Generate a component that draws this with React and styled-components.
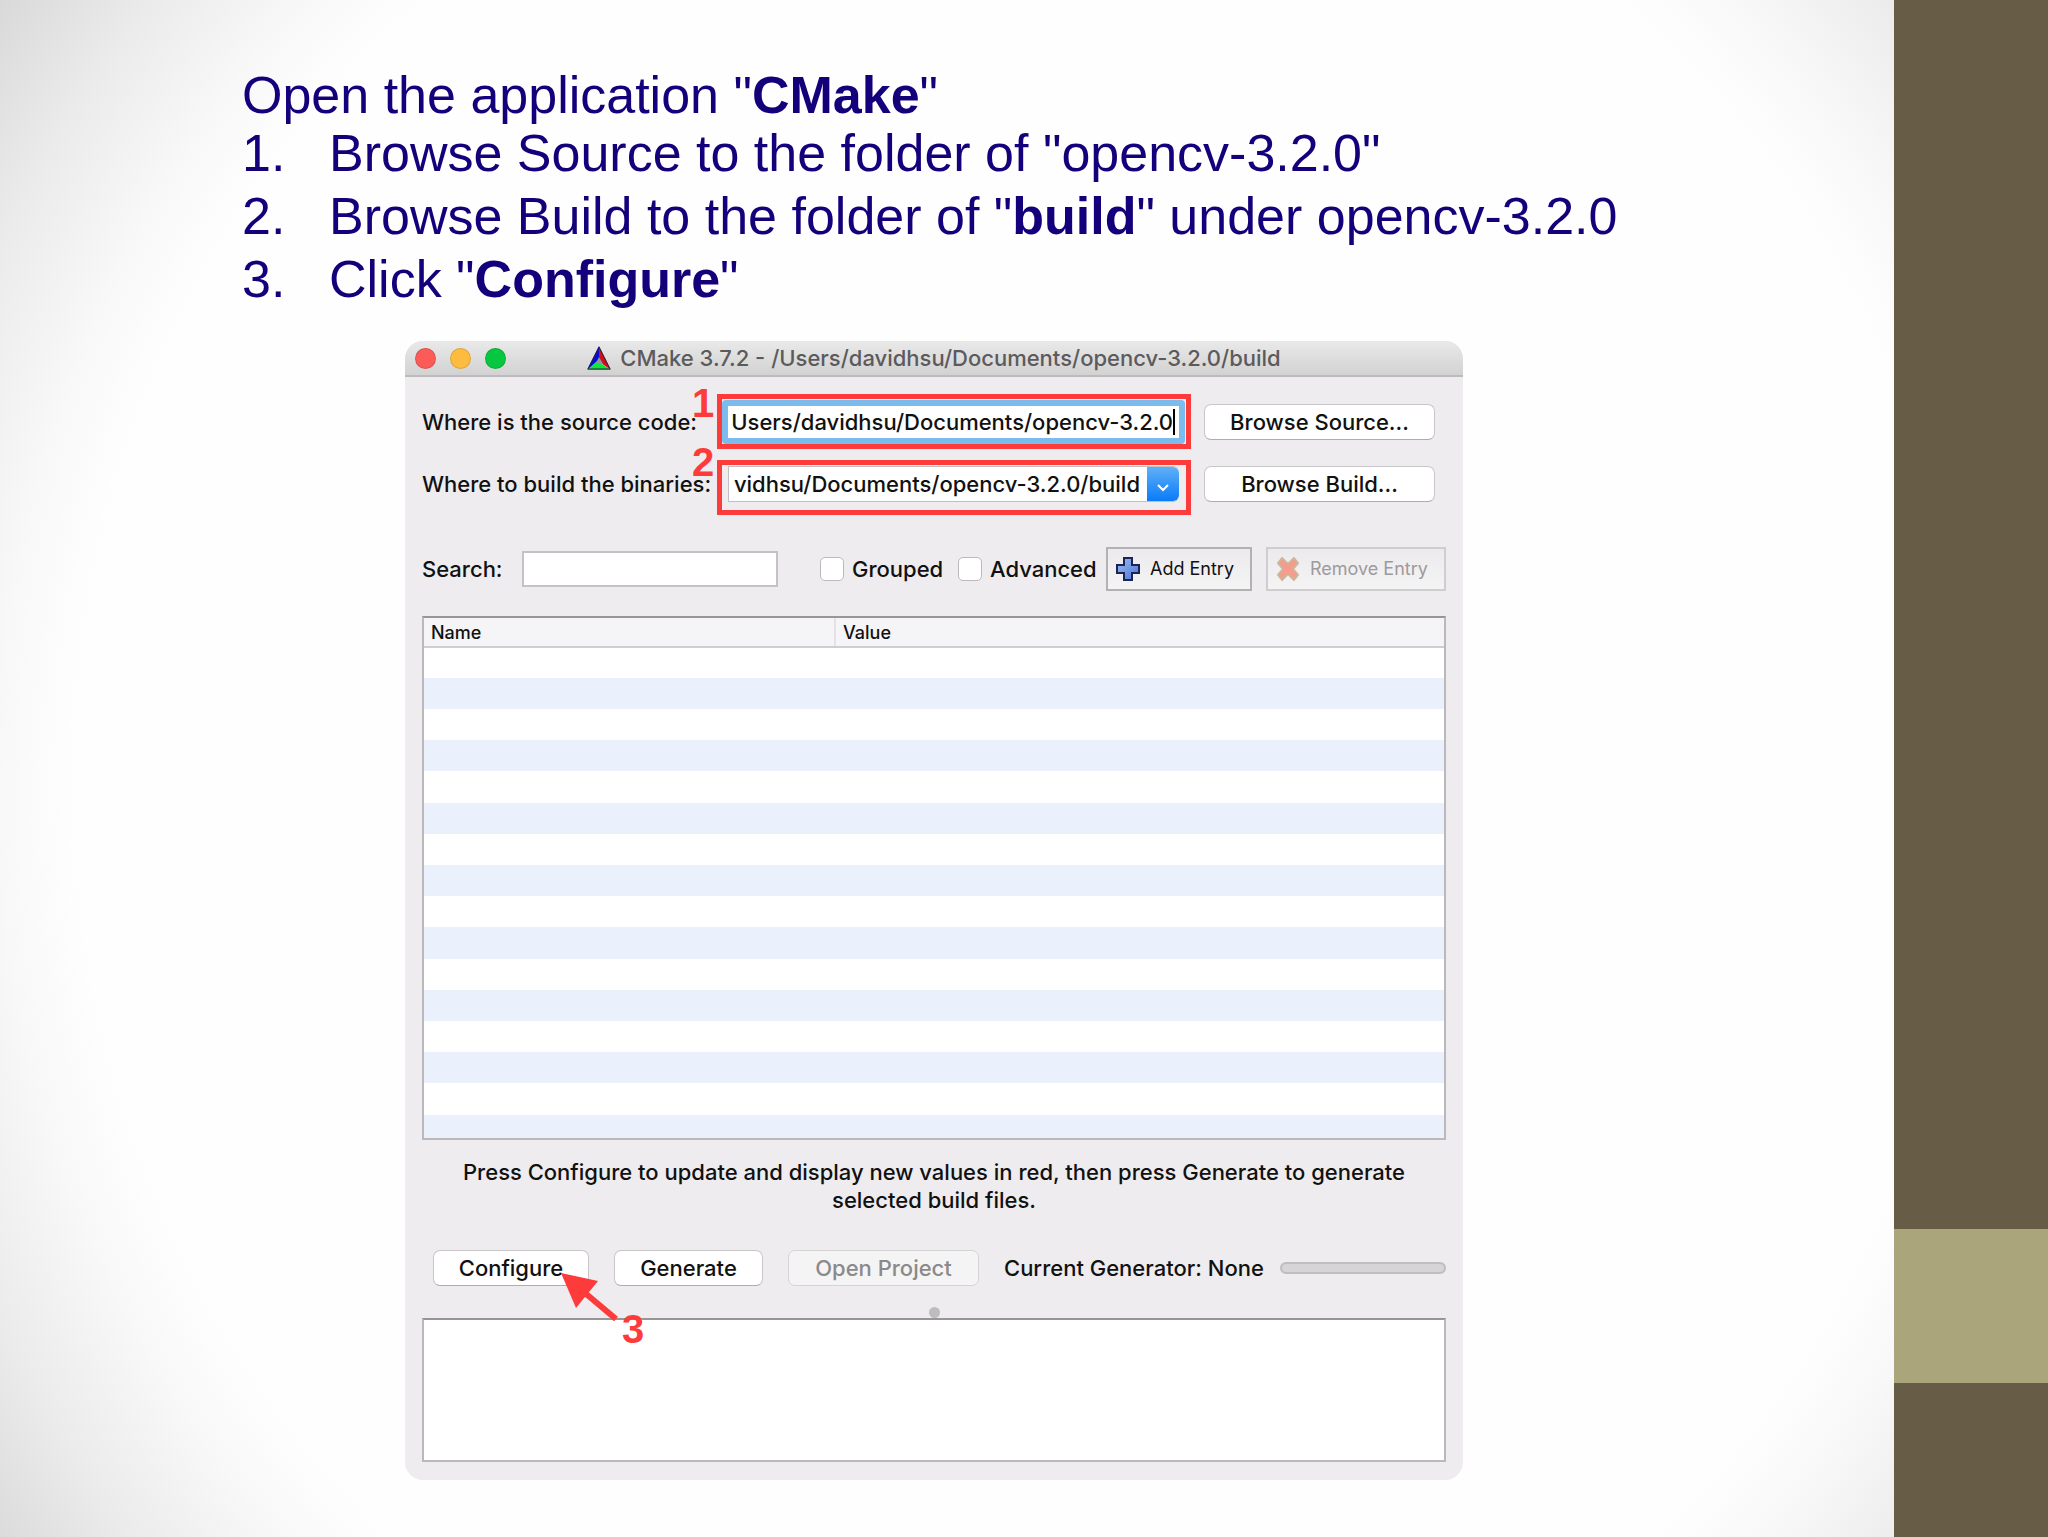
import React, { useState } from "react";
import styled, { createGlobalStyle } from "styled-components";

const rows = Array.from({ length: 16 }, (_, i) => i);

function CMakeLogo() {
  return (
    <svg width="24" height="24" viewBox="0 0 24 24" aria-hidden="true">
      <path d="M12 0 L0 24 L10 16 L13 12 Z" fill="#0a0ad2" />
      <path d="M12 0 L24 24 L14 17 L12 10 Z" fill="#cf1022" />
      <path d="M0 24 L10 15 L24 24 Z" fill="#0fe53c" />
      <path d="M12 11 L9 17 L16 18 Z" fill="#8d9a94" />
      <path d="M12 1 L1 23 H23 Z" fill="none" stroke="#23233a" strokeWidth="1" />
    </svg>
  );
}

function PlusIcon() {
  return (
    <svg width="24" height="24" viewBox="0 0 24 24" aria-hidden="true">
      <defs>
        <linearGradient id="plus" x1="0" y1="0" x2="1" y2="1">
          <stop offset="0" stopColor="#9dbcf5" />
          <stop offset="1" stopColor="#4a74cf" />
        </linearGradient>
      </defs>
      <path
        d="M8 1 H16 V8 H23 V16 H16 V23 H8 V16 H1 V8 H8 Z"
        fill="url(#plus)"
        stroke="#1a2458"
        strokeWidth="2"
      />
    </svg>
  );
}

function CrossIcon() {
  return (
    <svg width="24" height="24" viewBox="0 0 24 24" aria-hidden="true">
      <path
        d="M6 1 L12 7 L18 1 L22 6 L17 12 L22 18 L18 23 L12 17 L6 23 L2 18 L7 12 L2 6 Z"
        fill="#f79c8a"
        stroke="#cdb59c"
        strokeWidth="2"
        strokeLinejoin="round"
      />
    </svg>
  );
}

function App() {
  const [source, setSource] = useState("Users/davidhsu/Documents/opencv-3.2.0");
  const [build, setBuild] = useState("vidhsu/Documents/opencv-3.2.0/build");
  const [search, setSearch] = useState("");
  const [grouped, setGrouped] = useState(false);
  const [advanced, setAdvanced] = useState(false);

  return (
    <>
      <GlobalStyle />
      <StPage>
        <StSlide>
          <StIntro>
            <p>
              Open the application "<b>CMake</b>"
            </p>
            <ol>
              <li>Browse Source to the folder of "opencv-3.2.0"</li>
              <li>
                Browse Build to the folder of "<b>build</b>" under opencv-3.2.0
              </li>
              <li>
                Click "<b>Configure</b>"
              </li>
            </ol>
          </StIntro>

          <StWindow>
            <StTitleBar>
              <StLights>
                <StLight $color="#fc5b57" aria-label="Close" />
                <StLight $color="#fdbc40" aria-label="Minimize" />
                <StLight $color="#06c73f" aria-label="Zoom" />
              </StLights>
              <StTitle>
                <CMakeLogo />
                CMake 3.7.2 - /Users/davidhsu/Documents/opencv-3.2.0/build
              </StTitle>
            </StTitleBar>

            <StContent>
              <StPaths>
                <label htmlFor="source">Where is the source code:</label>
                <StField>
                  <StFocusRing>
                    <StPathInput
                      id="source"
                      value={source}
                      onChange={(e) => setSource(e.target.value)}
                    />
                    <StCaret />
                  </StFocusRing>
                  <StMark />
                  <StStep $top="-11px">1</StStep>
                </StField>
                <StButton>Browse Source...</StButton>

                <label htmlFor="build">Where to build the binaries:</label>
                <StField>
                  <StCombo>
                    <StPathInput
                      id="build"
                      value={build}
                      onChange={(e) => setBuild(e.target.value)}
                    />
                    <StArrowButton aria-label="Show recent build folders">
                      <svg width="12" height="8" viewBox="0 0 12 8" aria-hidden="true">
                        <path d="M1 1 L6 6 L11 1" fill="none" stroke="#fff" strokeWidth="2" />
                      </svg>
                    </StArrowButton>
                  </StCombo>
                  <StMark />
                  <StStep $top="-18px">2</StStep>
                </StField>
                <StButton>Browse Build...</StButton>
              </StPaths>

              <StToolbar>
                <label htmlFor="search">Search:</label>
                <StSearch
                  id="search"
                  value={search}
                  onChange={(e) => setSearch(e.target.value)}
                />
                <StCheck>
                  <input
                    type="checkbox"
                    checked={grouped}
                    onChange={(e) => setGrouped(e.target.checked)}
                  />
                  Grouped
                </StCheck>
                <StCheck>
                  <input
                    type="checkbox"
                    checked={advanced}
                    onChange={(e) => setAdvanced(e.target.checked)}
                  />
                  Advanced
                </StCheck>
                <StEntryButton $width="146px">
                  <PlusIcon />
                  Add Entry
                </StEntryButton>
                <StEntryButton $width="180px" disabled>
                  <CrossIcon />
                  Remove Entry
                </StEntryButton>
              </StToolbar>

              <StTableBox>
                <StTable>
                  <thead>
                    <tr>
                      <th>Name</th>
                      <th>Value</th>
                    </tr>
                  </thead>
                  <tbody>
                    {rows.map((row) => (
                      <tr key={row}>
                        <td />
                        <td />
                      </tr>
                    ))}
                  </tbody>
                </StTable>
              </StTableBox>

              <StHint>
                Press Configure to update and display new values in red, then press Generate to
                generate selected build files.
              </StHint>

              <StActions>
                <StConfigure>
                  <StButton $width="156px">Configure</StButton>
                  <StPointer>
                    <svg width="58" height="48" viewBox="0 0 58 48" aria-hidden="true">
                      <path d="M24 20 L55 46" stroke="#fd3b3b" strokeWidth="6" />
                      <path d="M0 0 L37 8 L15 35 Z" fill="#fd3b3b" />
                    </svg>
                    <span>3</span>
                  </StPointer>
                </StConfigure>
                <StButton $width="149px">Generate</StButton>
                <StButton $width="191px" disabled>
                  Open Project
                </StButton>
                <StGenerator>
                  Current Generator: None
                  <StProgress role="progressbar" aria-label="Progress" />
                </StGenerator>
              </StActions>

              <StSplitter />
              <StOutput aria-label="Output" readOnly />
            </StContent>
          </StWindow>
        </StSlide>
        <StSide>
          <StSideBlock />
        </StSide>
      </StPage>
    </>
  );
}

export default App;

const GlobalStyle = createGlobalStyle`
  * {
    box-sizing: border-box;
  }
  body {
    margin: 0;
  }
  button, input, textarea {
    font: inherit;
    color: inherit;
  }
`;

const StPage = styled.div`
  display: flex;
  min-height: 100vh;
`;

const StSlide = styled.main`
  flex: 1;
  padding: 67px 64px 56px 242px;
  background: radial-gradient(
    ellipse 51% 67% at 54% 51%,
    #fefefe 98%,
    #f8f8f8 106%,
    #ebebeb 118%,
    #d8d8d8 131%
  );
`;

const StSide = styled.aside`
  flex: 0 0 154px;
  display: flex;
  flex-direction: column;
  justify-content: flex-end;
  padding-bottom: 154px;
  background: #675c45;
`;

const StSideBlock = styled.div`
  height: 154px;
  background: #aba57b;
`;

const StIntro = styled.section`
  font-family: "Liberation Sans", Arial, sans-serif;
  font-size: 52px;
  line-height: 60px;
  color: #14007a;
  p {
    margin: 0;
    line-height: 56px;
  }
  ol {
    margin: 0;
    padding: 0;
    list-style: none;
    counter-reset: step;
  }
  li {
    display: flex;
    white-space: pre-wrap;
    counter-increment: step;
    margin-bottom: 3px;
  }
  li::before {
    content: counter(step) ".";
    flex: 0 0 87px;
  }
`;

const StWindow = styled.section`
  max-width: 1058px;
  margin: 32px 0 0 163px;
  border-radius: 18px;
  background: #eeecee;
  font-family: Inter, sans-serif;
  font-size: 22px;
  font-weight: 500;
  line-height: 28px;
  color: #111;
`;

const StTitleBar = styled.header`
  display: grid;
  grid-template-columns: 1fr auto 1fr;
  align-items: center;
  height: 36px;
  padding: 0 10px;
  border-bottom: 2px solid #bdbbbd;
  border-radius: 18px 18px 0 0;
  background: linear-gradient(#e9e9e9, #d3d2d3);
`;

const StLights = styled.div`
  display: flex;
  gap: 14px;
`;

const StLight = styled.button`
  width: 21px;
  height: 21px;
  padding: 0;
  border: 1px solid rgba(0, 0, 0, 0.12);
  border-radius: 50%;
  background: ${(props) => props.$color};
`;

const StTitle = styled.div`
  display: flex;
  align-items: center;
  gap: 9px;
  color: #5c5a5c;
`;

const StContent = styled.div`
  padding: 14px 17px 18px;
`;

const StPaths = styled.div`
  display: grid;
  grid-template-columns: 295px 1fr 231px;
  grid-auto-rows: 62px;
  align-items: center;
  padding-right: 11px;
  white-space: nowrap;
`;

const StField = styled.div`
  position: relative;
  margin-right: 13px;
`;

// red frame drawn round the field
const StMark = styled.div`
  position: absolute;
  top: -6px;
  left: 0;
  right: 0;
  height: 55px;
  border: 5px solid #fd3b3b;
  pointer-events: none;
`;

const StStep = styled.span`
  position: absolute;
  top: ${(props) => props.$top};
  left: -25px;
  font: bold 40px/28px "Liberation Sans", Arial, sans-serif;
  color: #fd3b3b;
`;

const StFocusRing = styled.div`
  display: flex;
  align-items: center;
  height: 44px;
  margin: 0 6px 0 5px;
  border: 6px solid #7cbcec;
  border-radius: 4px;
  background: #fff;
`;

const StCombo = styled.div`
  display: flex;
  height: 36px;
  margin: 0 12px 0 11px;
  border: 1px solid #c0bec0;
  border-right: none;
  border-radius: 0 6px 6px 0;
  background: #fff;
`;

const StPathInput = styled.input`
  flex: 1;
  min-width: 0;
  padding: 0;
  border: none;
  outline: none;
  background: none;
  text-align: right;
`;

const StCaret = styled.span`
  width: 2px;
  height: 26px;
  margin-right: 4px;
  background: #000;
`;

const StArrowButton = styled.button`
  width: 32px;
  margin-left: 7px;
  padding: 0;
  border: none;
  border-radius: 0 6px 6px 0;
  background: linear-gradient(#5fb0f8, #0a7bf7);
`;

const StButton = styled.button`
  width: ${(props) => props.$width || "100%"};
  height: 36px;
  padding: 0;
  border: 1px solid #c8c6c8;
  border-bottom-color: #aeacae;
  border-radius: 7px;
  background: #fff;
  white-space: nowrap;
  &:disabled {
    color: #8b898b;
    border-color: #d5d3d5;
    background: #f5f4f5;
  }
`;

const StToolbar = styled.div`
  display: flex;
  align-items: center;
  margin-top: 32px;
  & > label:first-child {
    width: 100px;
  }
`;

const StSearch = styled.input`
  width: 256px;
  height: 36px;
  padding: 0 6px;
  margin-right: 42px;
  border: 2px solid #c4c2c4;
  background: #fff;
`;

const StCheck = styled.label`
  display: flex;
  align-items: center;
  gap: 8px;
  width: 138px;
  white-space: nowrap;
  input {
    appearance: none;
    flex: none;
    width: 24px;
    height: 24px;
    margin: 0;
    border: 1px solid #bbb9bb;
    border-radius: 5px;
    background: #fff;
  }
  & + & {
    width: 148px;
  }
`;

const StEntryButton = styled.button`
  display: flex;
  align-items: center;
  gap: 10px;
  width: ${(props) => props.$width};
  height: 44px;
  padding: 0 8px;
  border: 2px solid #b3b1b3;
  background: linear-gradient(#eceaec, #f5f4f5);
  font-size: 18px;
  font-weight: 400;
  white-space: nowrap;
  & + & {
    margin-left: auto;
  }
  &:disabled {
    color: #9c9a9c;
    border-color: #cfcdcf;
  }
`;

const StTableBox = styled.div`
  height: 524px;
  margin-top: 25px;
  overflow: hidden;
  border: 2px solid #bab8ba;
  border-top-color: #979597;
  background: #fff;
`;

const StTable = styled.table`
  width: 100%;
  table-layout: fixed;
  border-collapse: collapse;
  th {
    height: 29px;
    padding: 0 7px;
    border-bottom: 2px solid #cfcdcf;
    background: #f5f4f6;
    font-size: 18px;
    font-weight: 500;
    line-height: 27px;
    text-align: left;
  }
  th:first-child {
    width: 411px;
  }
  th + th {
    border-left: 2px solid #e4e2e4;
  }
  td {
    height: 31px;
    padding: 0;
  }
  tbody tr:nth-child(even) {
    background: #ebf0fd;
  }
  tbody tr:nth-child(5n) td {
    height: 32px;
  }
`;

const StHint = styled.p`
  margin: 18px 24px 0;
  text-align: center;
`;

const StActions = styled.div`
  display: flex;
  align-items: center;
  gap: 25px;
  margin-top: 36px;
  padding-left: 11px;
  white-space: nowrap;
`;

const StConfigure = styled.div`
  position: relative;
`;

// red arrow that lies over the button and the output box
const StPointer = styled.div`
  position: absolute;
  top: 23px;
  left: 128px;
  display: flex;
  align-items: flex-start;
  z-index: 1;
  svg {
    flex: none;
  }
  span {
    margin-top: 36px;
    margin-left: 3px;
    font: bold 40px/40px "Liberation Sans", Arial, sans-serif;
    color: #fd3b3b;
  }
`;

const StGenerator = styled.div`
  flex: 1;
  display: flex;
  align-items: center;
  gap: 16px;
`;

const StProgress = styled.div`
  flex: 1;
  height: 12px;
  border: 2px solid #bfbdbf;
  border-radius: 6px;
  background: #d6d4d6;
`;

const StSplitter = styled.div`
  width: 11px;
  height: 11px;
  margin: 21px auto 0;
  border-radius: 50%;
  background: #bebcbe;
`;

const StOutput = styled.textarea`
  display: block;
  width: 100%;
  height: 144px;
  padding: 6px;
  border: 2px solid #bab8ba;
  border-top-color: #979597;
  outline: none;
  resize: none;
  background: #fff;
`;
